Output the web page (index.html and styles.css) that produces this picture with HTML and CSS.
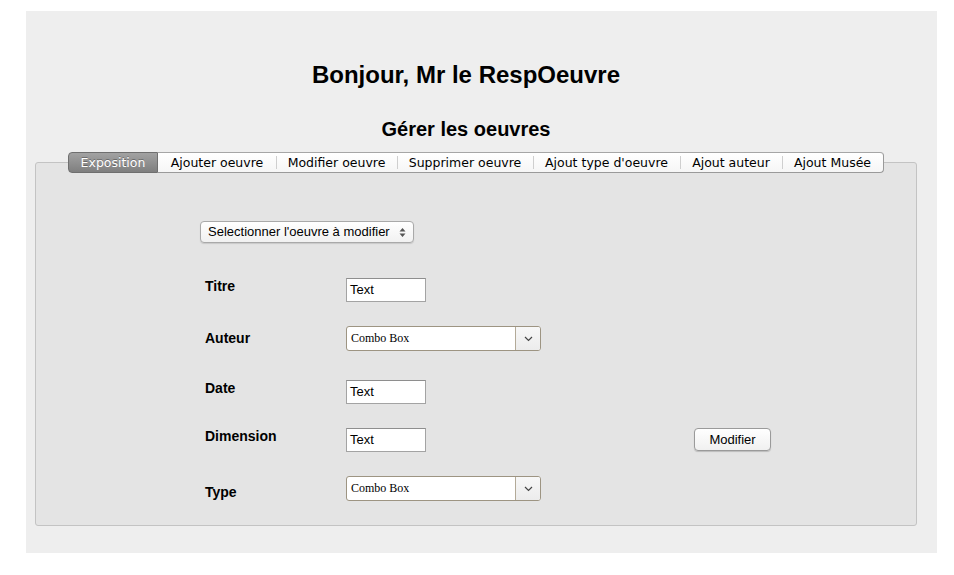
FILE: index.html
```html
<!DOCTYPE html>
<html>
<head>
<meta charset="utf-8">
<link rel="stylesheet" href="styles.css">
</head>
<body>
<div class="window">
  <h1 class="title">Bonjour, Mr le RespOeuvre</h1>
  <h2 class="subtitle">Gérer les oeuvres</h2>
  <div class="tabpanel">
    <div class="tabs">
      <div class="tab selected" style="width:90px">Exposition</div>
      <div class="tab" style="width:118px">Ajouter oeuvre</div>
      <div class="tab" style="width:121px">Modifier oeuvre</div>
      <div class="tab" style="width:136px">Supprimer oeuvre</div>
      <div class="tab" style="width:147px">Ajout type d'oeuvre</div>
      <div class="tab" style="width:102px">Ajout auteur</div>
      <div class="tab last" style="width:102px">Ajout Musée</div>
    </div>
    <div class="content">
      <div class="popup">
        <span class="popup-text">Selectionner l'oeuvre à modifier</span>
        <svg class="updown" width="7" height="11" viewBox="0 0 7 11"><path d="M3.5 1 L6.5 4.5 L0.5 4.5 Z M3.5 10 L6.5 6.5 L0.5 6.5 Z" fill="#555"/></svg>
      </div>
      <div class="row r-titre">
        <div class="label">Titre</div>
        <div class="textfield">Text</div>
      </div>
      <div class="row r-auteur">
        <div class="label off4">Auteur</div>
        <div class="combo"><span class="combo-text">Combo Box</span><span class="combo-btn"><svg width="9" height="6" viewBox="0 0 9 6"><path d="M1 1 L4.5 4.5 L8 1" fill="none" stroke="#444" stroke-width="1.2"/></svg></span></div>
      </div>
      <div class="row r-date">
        <div class="label">Date</div>
        <div class="textfield">Text</div>
      </div>
      <div class="row r-dim">
        <div class="label">Dimension</div>
        <div class="textfield">Text</div>
        <div class="button">Modifier</div>
      </div>
      <div class="row r-type">
        <div class="label off8">Type</div>
        <div class="combo"><span class="combo-text">Combo Box</span><span class="combo-btn"><svg width="9" height="6" viewBox="0 0 9 6"><path d="M1 1 L4.5 4.5 L8 1" fill="none" stroke="#444" stroke-width="1.2"/></svg></span></div>
      </div>
    </div>
  </div>
</div>
</body>
</html>
```
FILE: styles.css
```css
* { box-sizing: border-box; }
html, body { margin: 0; padding: 0; background: #ffffff; }
body { font-family: "Liberation Sans", Arial, sans-serif; color: #000; }

.window {
  margin: 11px 0 0 26px;
  width: 911px;
  height: 542px;
  background: #eeeeee;
  padding-top: 50px;
  display: flex;
  flex-direction: column;
}
.title {
  margin: 0;
  font-size: 24px;
  font-weight: bold;
  line-height: 28px;
  text-align: center;
  padding-right: 31px;
}
.subtitle {
  margin: 28px 0 0 0;
  font-size: 20px;
  font-weight: bold;
  line-height: 24px;
  text-align: center;
  padding-right: 31px;
}
.tabpanel {
  margin: 21px 0 0 9px;
  width: 882px;
  height: 364px;
  background: #e4e4e4;
  border: 1px solid #c3c3c3;
  border-radius: 3px;
  display: flex;
  flex-direction: column;
}
.tabs {
  display: flex;
  justify-content: center;
  margin-top: -11px;
  height: 21px;
}
.tab {
  height: 21px;
  font-family: "DejaVu Sans", sans-serif;
  font-size: 12.5px;
  line-height: 19px;
  text-align: center;
  color: #000;
  background: linear-gradient(#ffffff, #f6f6f6);
  border-top: 1px solid #a6a6a6;
  border-bottom: 1px solid #9a9a9a;
  position: relative;
}
.tab + .tab::before {
  content: "";
  position: absolute;
  left: 0;
  top: 3px;
  bottom: 3px;
  width: 1px;
  background: #cfcfcf;
}
.tab.selected + .tab::before { display: none; }
.tab.selected {
  color: #fff;
  background: linear-gradient(#a2a2a2, #7f7f7f);
  border: 1px solid #6f6f6f;
  border-radius: 4px 0 0 4px;
  text-shadow: 0 -1px 0 rgba(0,0,0,0.3);
}
.tab.last {
  border-right: 1px solid #9a9a9a;
  border-radius: 0 4px 4px 0;
}

.content {
  padding: 48px 0 0 164px;
  display: flex;
  flex-direction: column;
  align-items: flex-start;
}
.popup {
  width: 214px;
  height: 22px;
  background: linear-gradient(#ffffff, #f1f1f1);
  border: 1px solid #a9a9a9;
  border-radius: 4px;
  box-shadow: 0 1px 1px rgba(0,0,0,0.12);
  display: flex;
  align-items: center;
  padding: 0 0 0 7px;
  font-size: 13px;
}
.popup-text { flex: 1; line-height: 20px; }
.updown { margin-right: 7px; }

.row {
  display: flex;
  align-items: flex-start;
  padding-left: 5px;
}
.r-titre { margin-top: 35px; }
.r-auteur { margin-top: 24px; }
.r-date { margin-top: 29px; }
.r-dim { margin-top: 24px; }
.r-type { margin-top: 24px; }

.label {
  width: 141px;
  font-size: 14px;
  font-weight: bold;
  line-height: 16px;
}
.label.off4 { padding-top: 4px; }
.label.off8 { padding-top: 8px; }

.textfield {
  width: 80px;
  height: 24px;
  background: #ffffff;
  border: 1px solid #a3a3a3;
  border-top-color: #8e8e8e;
  font-size: 13px;
  line-height: 22px;
  padding-left: 3px;
}
.combo {
  width: 195px;
  height: 25px;
  background: #ffffff;
  border: 1px solid #9d9482;
  border-radius: 3px;
  display: flex;
  align-items: stretch;
}
.combo-text {
  flex: 1;
  font-family: "Liberation Serif", "Times New Roman", serif;
  font-size: 12px;
  line-height: 22px;
  padding-left: 4px;
}
.combo-btn {
  width: 25px;
  border-left: 1px solid #b3aa98;
  background: linear-gradient(#f7f7f7, #ececec);
  border-radius: 0 2px 2px 0;
  display: flex;
  align-items: center;
  justify-content: center;
}
.button {
  margin-left: 268px;
  width: 77px;
  height: 23px;
  background: linear-gradient(#ffffff, #f0f0f0);
  border: 1px solid #9a9a9a;
  border-radius: 4px;
  box-shadow: 0 1px 1px rgba(0,0,0,0.18);
  font-size: 13px;
  line-height: 21px;
  text-align: center;
}
```
